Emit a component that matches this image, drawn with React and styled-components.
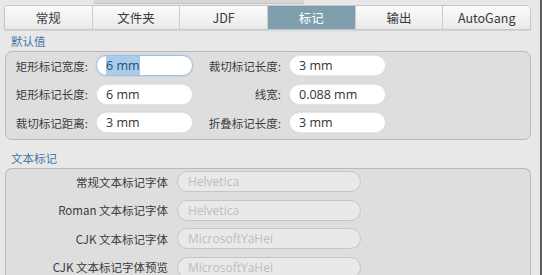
import React from 'react';
import styled, { createGlobalStyle } from 'styled-components';

const GlobalStyle = createGlobalStyle`
  html, body {
    margin: 0;
    padding: 0;
    background: #e8e8e8;
  }
  body {
    font-family: "Noto Sans CJK SC", "Noto Sans", sans-serif;
    font-size: 12px;
    color: #333;
  }
`;

const tabs = ['常规', '文件夹', 'JDF', '标记', '输出', 'AutoGang'];

const defaults = [
  ['矩形标记宽度:', '6 mm', '裁切标记长度:', '3 mm'],
  ['矩形标记长度:', '6 mm', '线宽:', '0.088 mm'],
  ['裁切标记距离:', '3 mm', '折叠标记长度:', '3 mm'],
];

const fonts = [
  ['常规文本标记字体', 'Helvetica'],
  ['Roman 文本标记字体', 'Helvetica'],
  ['CJK 文本标记字体', 'MicrosoftYaHei'],
  ['CJK 文本标记字体预览', 'MicrosoftYaHei'],
];

function App() {
  return (
    <>
      <GlobalStyle />
      <Page>
        <TopEdge>
          <TopStrip />
        </TopEdge>
        <TabBar>
          {tabs.map((t) => (
            <Tab key={t} $active={t === '标记'}>
              {t}
            </Tab>
          ))}
        </TabBar>

        <SectionTitle>默认值</SectionTitle>
        <Group>
          <DefaultsGrid>
            {defaults.map(([l1, v1, l2, v2], i) => (
              <React.Fragment key={l1}>
                <Label>{l1}</Label>
                <Field $focused={i === 0}>
                  {i === 0 ? <Selected>{v1}</Selected> : v1}
                </Field>
                <Label>{l2}</Label>
                <Field>{v2}</Field>
              </React.Fragment>
            ))}
          </DefaultsGrid>
        </Group>

        <SectionTitle $second>文本标记</SectionTitle>
        <Group $open>
          <FontGrid>
            {fonts.map(([l, v]) => (
              <React.Fragment key={l}>
                <Label>{l}</Label>
                <DisabledField>{v}</DisabledField>
              </React.Fragment>
            ))}
          </FontGrid>
        </Group>
      </Page>
    </>
  );
}

const Page = styled.div`
  width: 542px;
  height: 275px;
  box-sizing: border-box;
  overflow: hidden;
  background: #e8e8e8;
  border-right: 2px solid #5c5c5c;
  padding: 0 9px 0 4px;
  display: flex;
  flex-direction: column;
`;

const TopEdge = styled.div`
  height: 5px;
  flex-shrink: 0;
  display: flex;
`;

const TopStrip = styled.div`
  margin-left: 90px;
  width: 210px;
  height: 3px;
  background: #d6d6d6;
  border-bottom: 1px solid #c4c4c4;
`;

const TabBar = styled.div`
  display: flex;
  flex-shrink: 0;
  height: 25px;
  box-sizing: border-box;
  border: 1px solid #c6c6c6;
  border-radius: 3px 5px 0 0;
  overflow: hidden;
  box-shadow: 0 1px 1px rgba(0, 0, 0, 0.08);
`;

const Tab = styled.div`
  flex: 1;
  display: flex;
  align-items: center;
  justify-content: center;
  font-size: 12.5px;
  color: ${({ $active }) => ($active ? '#ffffff' : '#3a3a3a')};
  background: ${({ $active }) =>
    $active ? '#809fae' : 'linear-gradient(#fbfbfb, #e9e9e9)'};
  border-left: 1px solid #cbcbcb;

  &:first-child {
    border-left: none;
  }
`;

const SectionTitle = styled.div`
  flex-shrink: 0;
  color: #4677a5;
  font-size: 11.5px;
  line-height: 14px;
  padding-left: 7px;
  margin-top: ${({ $second }) => ($second ? '11px' : '4px')};
  margin-bottom: 3px;
`;

const Group = styled.div`
  flex-shrink: 0;
  margin-left: 1px;
  background: #dedede;
  border: 1px solid #b9b9b9;
  border-radius: ${({ $open }) => ($open ? '7px 7px 0 0' : '7px')};
  ${({ $open }) => ($open ? 'border-bottom: none; flex: 1 0 auto;' : '')}
`;

const DefaultsGrid = styled.div`
  display: grid;
  grid-template-columns: 82px 97px 80px 97px;
  column-gap: 8px;
  row-gap: 7.5px;
  align-items: center;
  padding: 3px 0 6px 0;
`;

const FontGrid = styled.div`
  display: grid;
  grid-template-columns: 162px 184px;
  column-gap: 9px;
  row-gap: 7.5px;
  align-items: center;
  padding: 2px 0 0 0;
`;

const Label = styled.div`
  text-align: right;
  white-space: nowrap;
  font-size: 11.5px;
  color: #3c3c3c;
`;

const Field = styled.div`
  height: 21px;
  box-sizing: border-box;
  border-radius: 11px;
  background: #ffffff;
  border: 1px solid ${({ $focused }) => ($focused ? '#a9bfd3' : '#e6e6e6')};
  box-shadow: ${({ $focused }) =>
    $focused ? '0 0 0 1px #c8d6e2' : '0 0 1px rgba(0,0,0,0.1)'};
  display: flex;
  align-items: center;
  padding-left: 9px;
  font-family: "Open Sans", "Noto Sans", sans-serif;
  font-size: 12.5px;
  color: #333;
`;

const Selected = styled.span`
  background: #a9cbec;
  color: #2a4a6a;
  padding: 1px 0;
`;

const DisabledField = styled.div`
  height: 21px;
  box-sizing: border-box;
  border-radius: 11px;
  background: #e9e9e9;
  border: 1px solid #c6c6c6;
  display: flex;
  align-items: center;
  padding-left: 10px;
  font-family: "Open Sans", "Noto Sans", sans-serif;
  font-size: 12px;
  color: #bdbdbd;
`;

export default App;
